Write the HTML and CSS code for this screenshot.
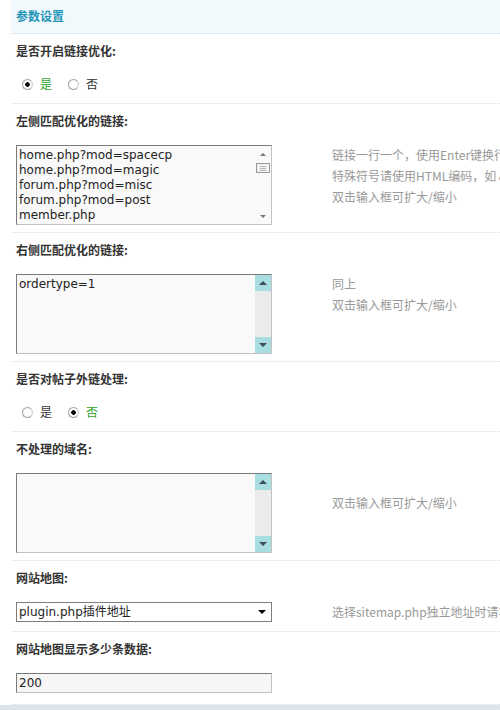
FILE: index.html
```html
<!DOCTYPE html>
<html lang="zh-CN">
<head>
    <meta charset="UTF-8">
    <meta name="viewport" content="width=device-width, initial-scale=1.0">
    <title>参数设置</title>
    <link rel="stylesheet" href="styles.css">
</head>
<body>
    <div class="panel">
        <div class="panel-head">参数设置</div>

        <div class="setting">
            <div class="setting-label">是否开启链接优化:</div>
            <div class="setting-value radios">
                <label class="radio on"><input type="radio" name="linkopt" checked>是</label>
                <label class="radio"><input type="radio" name="linkopt">否</label>
            </div>
        </div>

        <div class="setting">
            <div class="setting-label">左侧匹配优化的链接:</div>
            <div class="setting-value">
                <div class="textbox">
                    <textarea>home.php?mod=spacecp
home.php?mod=magic
forum.php?mod=misc
forum.php?mod=post
member.php</textarea>
                    <div class="scroll plain">
                        <div class="scroll-btn"><span class="arrow-up"></span></div>
                        <div class="scroll-track"><div class="thumb"></div></div>
                        <div class="scroll-btn"><span class="arrow-down"></span></div>
                    </div>
                </div>
                <div class="tip">
                    链接一行一个，使用Enter键换行，请勿留空行<br>
                    特殊符号请使用HTML编码，如 &amp;amp; 表示 &amp;<br>
                    双击输入框可扩大/缩小
                </div>
            </div>
        </div>

        <div class="setting">
            <div class="setting-label">右侧匹配优化的链接:</div>
            <div class="setting-value">
                <div class="textbox">
                    <textarea>ordertype=1</textarea>
                    <div class="scroll cyan">
                        <div class="scroll-btn"><span class="arrow-up"></span></div>
                        <div class="scroll-track"></div>
                        <div class="scroll-btn"><span class="arrow-down"></span></div>
                    </div>
                </div>
                <div class="tip">
                    同上<br>
                    双击输入框可扩大/缩小
                </div>
            </div>
        </div>

        <div class="setting">
            <div class="setting-label">是否对帖子外链处理:</div>
            <div class="setting-value radios">
                <label class="radio"><input type="radio" name="outlink">是</label>
                <label class="radio on"><input type="radio" name="outlink" checked>否</label>
            </div>
        </div>

        <div class="setting">
            <div class="setting-label">不处理的域名:</div>
            <div class="setting-value">
                <div class="textbox">
                    <textarea></textarea>
                    <div class="scroll cyan">
                        <div class="scroll-btn"><span class="arrow-up"></span></div>
                        <div class="scroll-track"></div>
                        <div class="scroll-btn"><span class="arrow-down"></span></div>
                    </div>
                </div>
                <div class="tip tip-mid">双击输入框可扩大/缩小</div>
            </div>
        </div>

        <div class="setting">
            <div class="setting-label">网站地图:</div>
            <div class="setting-value short">
                <div class="select">
                    <select>
                        <option>plugin.php插件地址</option>
                        <option>sitemap.php独立地址</option>
                    </select>
                    <span class="select-arrow"><span class="arrow-down"></span></span>
                </div>
                <div class="tip tip-line">选择sitemap.php独立地址时请将文件上传到根目录</div>
            </div>
        </div>

        <div class="setting">
            <div class="setting-label">网站地图显示多少条数据:</div>
            <div class="setting-value short last">
                <input class="text-input" type="text" value="200">
            </div>
        </div>
    </div>
    <div class="footer-bar"></div>
</body>
</html>
```

FILE: styles.css
```css
body {
    margin: 0;
    width: 500px;
    height: 710px;
    overflow: hidden;
    font-family: "Noto Sans CJK SC", "DejaVu Sans", sans-serif;
    font-size: 12px;
    color: #333;
    background: #fff;
}
.panel {
    margin-left: 11px;
}
.panel-head {
    height: 33px;
    line-height: 32px;
    padding-left: 5px;
    background: #f2f9fd;
    color: #1f95b8;
    font-weight: bold;
    border-bottom: 1px dotted #cfdfe9;
}
.setting {
    border-bottom: 1px dotted #d3e0e8;
}
.setting-label {
    height: 14px;
    padding: 10px 5px 9px;
    line-height: 14px;
    font-weight: bold;
    color: #333;
}
.setting-value {
    display: flex;
    align-items: flex-start;
    padding: 8px 5px 7px;
}
.setting-value.radios {
    height: 18px;
    align-items: center;
    padding-bottom: 10px;
}
.setting-value.short {
    height: 20px;
    align-items: center;
    padding-bottom: 9px;
}
.setting-value.last {
    padding-bottom: 11px;
}
.radio {
    display: inline-flex;
    align-items: center;
    gap: 7px;
    margin-left: 6px;
    margin-right: 10px;
    line-height: 18px;
    color: #333;
}
.radio.on {
    color: #2ea52e;
}
.radio input {
    appearance: none;
    -webkit-appearance: none;
    width: 11px;
    height: 11px;
    margin: 0;
    box-sizing: border-box;
    border: 1px solid #a3a3a3;
    border-right-color: #d0d0d0;
    border-radius: 50%;
    background: radial-gradient(circle, #fff 40%, #ececec);
}
.radio input:checked {
    background: radial-gradient(circle, #000 0 2px, #fff 2.5px, #ececec);
}
.textbox {
    width: 256px;
    height: 80px;
    flex: none;
    box-sizing: border-box;
    display: flex;
    border: 1px solid;
    border-color: #7a7a7a #c2c2c2 #c2c2c2 #7a7a7a;
    background: #f9f9f9;
}
.textbox textarea {
    flex: 1;
    min-width: 0;
    margin: 0;
    padding: 2px 2px 0;
    border: 0;
    background: transparent;
    font-family: "DejaVu Sans", sans-serif;
    font-size: 12px;
    line-height: 15px;
    color: #222;
    resize: none;
    overflow: hidden;
    outline: none;
}
.scroll {
    width: 16px;
    display: flex;
    flex-direction: column;
}
.scroll-btn {
    height: 16px;
    display: flex;
    align-items: center;
    justify-content: center;
}
.scroll-track {
    flex: 1;
}
.scroll.cyan .scroll-btn {
    background: #a9dee1;
}
.scroll.cyan .scroll-track {
    background: #ececec;
}
.arrow-up,
.arrow-down {
    width: 0;
    height: 0;
    border-left: 4px solid transparent;
    border-right: 4px solid transparent;
}
.arrow-up {
    border-bottom: 4px solid #3d4c57;
}
.arrow-down {
    border-top: 4px solid #3d4c57;
}
.scroll.plain .arrow-up {
    border-width: 0 3px 3px;
    border-bottom-color: #777;
}
.scroll.plain .arrow-down {
    border-width: 3px 3px 0;
    border-top-color: #777;
}
.thumb {
    width: 12px;
    height: 8px;
    margin: 1px 0 0 1px;
    border: 1px solid #9a9a9a;
    background: repeating-linear-gradient(#f2f2f2 0 1px, #b8b8b8 1px 2px);
    background-size: 6px 6px;
    background-position: center;
    background-repeat: no-repeat;
    background-color: #f2f2f2;
}
.tip {
    margin-left: 60px;
    color: #999;
    line-height: 21px;
    white-space: nowrap;
    margin-top: -1px;
}
.tip-mid {
    margin-top: 19px;
}
.tip-line {
    margin-top: 0;
    line-height: 20px;
}
.select {
    width: 256px;
    height: 20px;
    flex: none;
    box-sizing: border-box;
    display: flex;
    border: 1px solid #7e7e7e;
    background: #fff;
}
.select select {
    flex: 1;
    min-width: 0;
    appearance: none;
    -webkit-appearance: none;
    margin: 0;
    padding: 0 0 0 2px;
    border: 0;
    background: transparent;
    font-family: "DejaVu Sans", "Noto Sans CJK SC", sans-serif;
    font-size: 12px;
    color: #222;
    outline: none;
}
.select-arrow {
    width: 18px;
    display: flex;
    align-items: center;
    justify-content: center;
}
.select-arrow .arrow-down {
    border-top-color: #000;
}
.text-input {
    width: 256px;
    height: 20px;
    box-sizing: border-box;
    margin: 0;
    padding: 0 2px;
    border: 1px solid;
    border-color: #7a7a7a #c2c2c2 #c2c2c2 #7a7a7a;
    background: #f6f6f6;
    font-family: "DejaVu Sans", sans-serif;
    font-size: 12px;
    color: #222;
    outline: none;
}
.footer-bar {
    height: 6px;
    background: #dde5ea;
}
```
